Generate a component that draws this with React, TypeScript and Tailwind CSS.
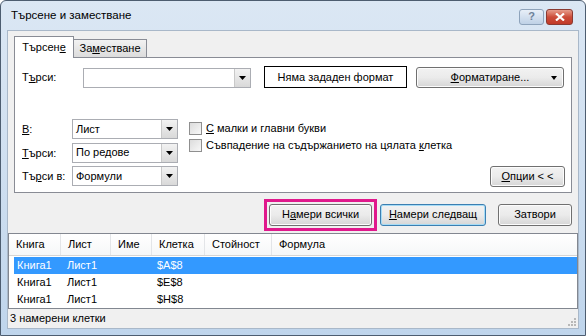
import { ReactNode } from "react";

const font = "font-['Liberation_Sans','Noto_Sans',sans-serif]";

function Combo({ value, className }: { value?: string; className: string }) {
  return (
    <div className={`flex h-[20px] border border-[#abadb3] bg-white ${className}`}>
      <div className="flex flex-1 items-center pl-[3px] text-[11px] text-black">{value}</div>
      <DropBtn />
    </div>
  );
}

function DropBtn() {
  return (
    <div className="flex w-[16px] items-center justify-center border-l border-[#c9c9c9] bg-gradient-to-b from-[#f2f2f2] to-[#d9d9d9]">
      <svg width="7" height="4" viewBox="0 0 7 4">
        <path d="M0 0h7L3.5 4z" fill="#000" />
      </svg>
    </div>
  );
}

function Btn({
  children,
  className = "",
  focused = false,
}: {
  children: ReactNode;
  className?: string;
  focused?: boolean;
}) {
  return (
    <div
      className={`flex h-[22px] items-center justify-center rounded-[3px] border text-[11px] text-black ${
        focused
          ? "border-[#3c7fb1] shadow-[inset_0_0_0_1px_#a6dcf6]"
          : "border-[#707070] shadow-[inset_0_0_0_1px_#fcfcfc]"
      } bg-gradient-to-b from-[#f2f2f2] via-[#ebebeb] to-[#d6d6d6] ${className}`}
    >
      {children}
    </div>
  );
}

function Check({ children }: { children: ReactNode }) {
  return (
    <div className="flex h-[17px] items-center gap-[4px]">
      <div className="h-[13px] w-[13px] border border-[#8f8f8f] bg-gradient-to-br from-[#dcdcdc] to-[#f8f8f8]" />
      <span className="text-[11px] text-black">{children}</span>
    </div>
  );
}

const rows = [
  { book: "Книга1", sheet: "Лист1", cell: "$A$8", selected: true },
  { book: "Книга1", sheet: "Лист1", cell: "$E$8", selected: false },
  { book: "Книга1", sheet: "Лист1", cell: "$H$8", selected: false },
];

const cols = [
  { label: "Книга", w: "w-[52px]" },
  { label: "Лист", w: "w-[50px]" },
  { label: "Име", w: "w-[41px]" },
  { label: "Клетка", w: "w-[53px]" },
  { label: "Стойност", w: "w-[67px]" },
  { label: "Формула", w: "flex-1" },
];

export default function App() {
  return (
    <div className={`${font} h-[336px] w-[586px] overflow-hidden bg-white`}>
      <div className="flex h-[336px] w-[586px] flex-col rounded-t-[6px] border border-[#4d5d70] bg-gradient-to-b from-[#dbe7f4] via-[#cfdff0] to-[#bfd5ec]">
        {/* title bar */}
        <div className="flex h-[29px] items-center justify-between pl-[10px] pr-[12px]">
          <span className="text-[11.5px] text-black">Търсене и заместване</span>
          <div className="flex items-center gap-[2px] pt-[2px]">
            <div className="flex h-[16px] w-[25px] items-center justify-center rounded-[3px] border border-[#8ea3bb] bg-gradient-to-b from-[#e8eff8] to-[#bfd1e6] text-[11px] font-bold text-[#6d819a]">
              ?
            </div>
            <div className="flex h-[16px] w-[27px] items-center justify-center rounded-[3px] border border-[#8a3a32] bg-gradient-to-b from-[#e69c8c] via-[#cc4c3a] to-[#c13a28]">
              <svg width="10" height="8" viewBox="0 0 10 8">
                <path d="M1 0.5L9 7.5M9 0.5L1 7.5" stroke="#fff" strokeWidth="2.2" />
              </svg>
            </div>
          </div>
        </div>

        {/* client area */}
        <div className="mx-[6px] flex flex-1 flex-col border border-[#a9b8c9] bg-[#f0f0f0]">
          {/* tabs */}
          <div className="px-[6px] pt-[5px]">
            <div className="flex h-[21px] items-end">
              <div className="relative z-10 -mb-px flex h-[22px] w-[60px] items-center justify-center border border-b-0 border-[#898c95] bg-white text-[11px] text-black">
                Търсен<u>е</u>
              </div>
              <div className="flex h-[18px] w-[73px] items-center justify-center border border-l-0 border-b-0 border-[#898c95] bg-gradient-to-b from-[#f2f2f2] to-[#dcdcdc] text-[11px] text-black">
                За<u>м</u>естване
              </div>
            </div>
            <div className="h-[136px] border border-[#898c95] bg-white pl-[7px] pr-[6px]">
              <div className="flex h-[30px] items-end">
                <span className="w-[61px] pb-[3px] text-[11px] text-black">
                  Т<u>ъ</u>рси:
                </span>
                <Combo className="w-[168px]" />
                <div className="ml-[13px] flex h-[22px] w-[143px] items-center justify-center border border-black text-[11px] text-black">
                  Няма зададен формат
                </div>
                <Btn className="relative ml-[9px] !h-[21px] w-[148px]">
                  <span>
                    <u>Ф</u>орматиране...
                  </span>
                  <svg className="absolute right-[6px] top-[8px]" width="6" height="4" viewBox="0 0 6 4">
                    <path d="M0 0h6L3 4z" fill="#000" />
                  </svg>
                </Btn>
              </div>

              <div className="mt-[31px] flex">
                <div className="grid grid-cols-[50px_106px] gap-y-[3px]">
                  <span className="flex items-center text-[11px] text-black">
                    <u>В</u>:
                  </span>
                  <Combo value="Лист" className="w-[106px]" />
                  <span className="flex items-center text-[11px] text-black">
                    <u>Т</u>ърси:
                  </span>
                  <Combo value="По редове" className="w-[106px]" />
                  <span className="flex items-center text-[11px] text-black">
                    Тъ<u>р</u>си в:
                  </span>
                  <Combo value="Формули" className="w-[106px]" />
                </div>
                <div className="ml-[11px] flex flex-1 flex-col pt-[1px]">
                  <Check>
                    <u>С</u> малки и главни букви
                  </Check>
                  <Check>
                    Съвпадение на съдържанието на цялата <u>к</u>летка
                  </Check>
                  <div className="mt-[12px] flex justify-end">
                    <Btn className="!h-[21px] w-[75px]">
                      <span>
                        <u>О</u>пции &lt; &lt;
                      </span>
                    </Btn>
                  </div>
                </div>
              </div>
            </div>
          </div>

          {/* action buttons */}
          <div className="flex h-[40px] items-center justify-end pr-[6px] pt-[3px]">
            <div className="border-[3px] border-[#e0198c] p-[2px]">
              <Btn className="w-[103px]">
                <span>
                  Н<u>а</u>мери всички
                </span>
              </Btn>
            </div>
            <Btn focused className="ml-[3px] w-[106px]">
              <span>
                <u>Н</u>амери следващ
              </span>
            </Btn>
            <Btn className="ml-[12px] w-[74px]">Затвори</Btn>
          </div>

          {/* results list */}
          <div className="flex h-[76px] flex-col border border-[#828790] bg-white">
            <div className="flex h-[23px] border-b border-[#d5d5d5] bg-gradient-to-b from-white to-[#f6f7f8] text-[11px] text-black">
              {cols.map((c, i) => (
                <div
                  key={c.label}
                  className={`flex items-center pl-[7px] ${c.w} ${
                    i < cols.length - 1 ? "border-r border-[#e3e5e8]" : ""
                  }`}
                >
                  {c.label}
                </div>
              ))}
            </div>
            <div className="flex flex-col pl-[5px] pt-[1px]">
              {rows.map((r) => (
                <div
                  key={r.cell}
                  className={`flex h-[17px] items-center text-[11px] ${
                    r.selected ? "bg-[#3399ff] text-white" : "text-black"
                  }`}
                >
                  <span className="w-[53px] pl-[3px]">{r.book}</span>
                  <span className="w-[90px]">{r.sheet}</span>
                  <span>{r.cell}</span>
                </div>
              ))}
            </div>
          </div>

          {/* status bar */}
          <div className="relative flex flex-1 items-center pl-[2px] text-[11px] text-black">
            3 намерени клетки
            <svg className="absolute bottom-[2px] right-[2px]" width="10" height="10" viewBox="0 0 10 10">
              <g fill="#b8b8b8">
                <rect x="8" y="2" width="2" height="2" />
                <rect x="5" y="5" width="2" height="2" />
                <rect x="8" y="5" width="2" height="2" />
                <rect x="2" y="8" width="2" height="2" />
                <rect x="5" y="8" width="2" height="2" />
                <rect x="8" y="8" width="2" height="2" />
              </g>
            </svg>
          </div>
        </div>
        <div className="h-[6px]" />
      </div>
    </div>
  );
}
